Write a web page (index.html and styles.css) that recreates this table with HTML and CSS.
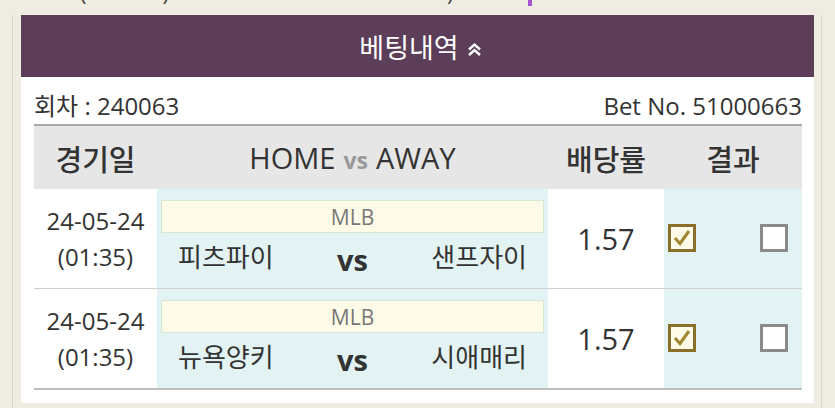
FILE: index.html
```html
<!DOCTYPE html>
<html lang="ko">
<head>
<meta charset="utf-8">
<link rel="stylesheet" href="styles.css">
</head>
<body>
<div class="topline">
  <span class="glyph g1">(</span>
  <span class="glyph g2">)</span>
  <span class="glyph g3">)</span>
  <span class="pbar"></span>
</div>
<div class="panel">
  <div class="card">
    <div class="title">베팅내역
      <svg class="chev" width="15" height="15" viewBox="0 0 15 15"><path d="M2 7.5 L7.5 2.5 L13 7.5 M2 13 L7.5 8 L13 13" fill="none" stroke="#fff" stroke-width="2.4"/></svg>
    </div>
    <div class="info">
      <span>회차 : 240063</span>
      <span>Bet No. 51000663</span>
    </div>
    <div class="table">
      <div class="row head">
        <div class="c1 hb">경기일</div>
        <div class="c2 hn">HOME <span class="hvs">vs</span> AWAY</div>
        <div class="c3 hb">배당률</div>
        <div class="c4 hb">결과</div>
      </div>
      <div class="row">
        <div class="c1 date"><span>24-05-24</span><span>(01:35)</span></div>
        <div class="c2 game">
          <div class="league">MLB</div>
          <div class="teams"><span>피츠파이</span><b>vs</b><span>샌프자이</span></div>
        </div>
        <div class="c3 odds">1.57</div>
        <div class="c4 res">
          <span class="box on"><svg width="22" height="22" viewBox="0 0 22 22"><path d="M4 11 L9 16.5 L18 4" fill="none" stroke="#a0852f" stroke-width="3"/></svg></span>
          <span class="box off"></span>
        </div>
      </div>
      <div class="row">
        <div class="c1 date"><span>24-05-24</span><span>(01:35)</span></div>
        <div class="c2 game">
          <div class="league">MLB</div>
          <div class="teams"><span>뉴욕양키</span><b>vs</b><span>시애매리</span></div>
        </div>
        <div class="c3 odds">1.57</div>
        <div class="c4 res">
          <span class="box on"><svg width="22" height="22" viewBox="0 0 22 22"><path d="M4 11 L9 16.5 L18 4" fill="none" stroke="#a0852f" stroke-width="3"/></svg></span>
          <span class="box off"></span>
        </div>
      </div>
    </div>
  </div>
</div>
</body>
</html>
```

FILE: styles.css
```css
* { box-sizing: border-box; }
html, body { margin: 0; padding: 0; }
body {
  background: #efede2;
  font-family: "Open Sans", "Noto Sans CJK KR", sans-serif;
  color: #333;
  width: 835px;
  height: 408px;
  overflow: hidden;
}
.topline {
  height: 15px;
  display: flex;
  align-items: flex-start;
  overflow: hidden;
  padding-left: 80px;
}
.glyph {
  font-size: 22px;
  line-height: 22px;
  margin-top: -19px;
  color: #444;
}
.g2 { margin-left: 76px; }
.g3 { margin-left: 278px; }
.pbar {
  width: 4px;
  height: 6px;
  background: #a452d0;
  margin-left: 74px;
}
.panel {
  margin: 0 13px 0 12px;
  border-left: 1px solid #ddd8c6;
  border-right: 1px solid #ddd8c6;
  padding: 0 7px 5px 8px;
  height: 393px;
}
.card {
  background: #fff;
  height: 388px;
  padding: 0 12px 0 0;
}
.title {
  height: 62px;
  background: #5c3e58;
  color: #fff;
  font-size: 27px;
  display: flex;
  align-items: center;
  justify-content: center;
  gap: 8px;
  margin-right: -12px;
  padding-left: 6px;
}
.chev { margin-top: 6px; }
.info {
  display: flex;
  justify-content: space-between;
  align-items: flex-end;
  height: 47px;
  padding: 0 0 3px 13px;
  font-size: 24px;
  line-height: 30px;
}
.table {
  margin-left: 13px;
  border-top: 2px solid #a9a9a9;
}
.row {
  display: grid;
  grid-template-columns: 123px 391px 116px 138px;
  height: 100px;
  border-bottom: 1px solid #cfcfcf;
}
.row:last-child { border-bottom: 2px solid #bdbdbd; height: 101px; }
.row.head {
  height: 63px;
  background: #e6e6e6;
  border-bottom: none;
}
.head > div {
  display: flex;
  align-items: center;
  justify-content: center;
  font-size: 29px;
}
.hb { font-weight: 500; }
.hn { font-weight: 400; }
.hvs { color: #999; font-weight: 700; font-size: 23px; margin: 4px 8px 0; }
.date {
  display: flex;
  flex-direction: column;
  justify-content: center;
  align-items: center;
  font-size: 24px;
  line-height: 36px;
}
.c2.game { background: #e3f3f3; padding: 11px 4px 0; }
.league {
  height: 33px;
  background: #fdfbe8;
  border: 1px solid #d6e6d6;
  display: flex;
  align-items: center;
  justify-content: center;
  font-size: 21px;
  color: #777;
}
.teams {
  display: flex;
  justify-content: space-between;
  align-items: center;
  padding: 0 17px 0;
  font-size: 26px;
  height: 46px;
}
.teams b { font-size: 29px; font-weight: 700; margin-top: 6px; }
.odds {
  display: flex;
  align-items: center;
  justify-content: center;
  font-size: 29px;
}
.res {
  background: #e3f3f3;
  display: flex;
  align-items: center;
  justify-content: space-between;
  padding: 0 14px 2px 4px;
}
.box {
  width: 28px;
  height: 28px;
  border: 3px solid #8a6f2a;
  background: #fff;
  display: flex;
  align-items: center;
  justify-content: center;
}
.box.on { background: #fdfbe8; }
.box.off { border-color: #8a8a8a; }
```
